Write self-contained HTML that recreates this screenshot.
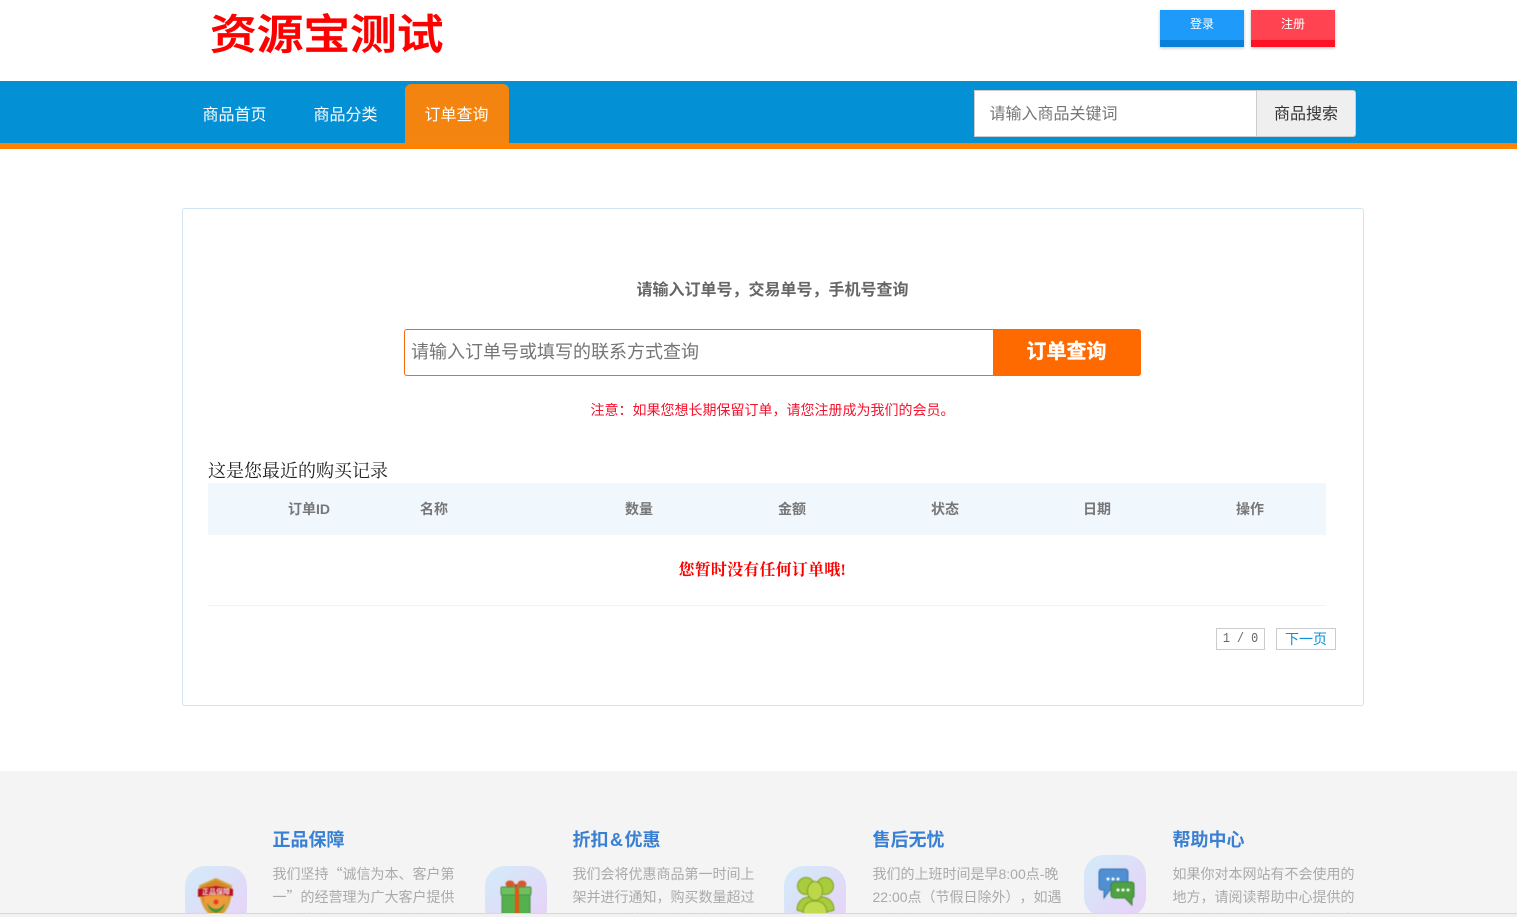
<!DOCTYPE html>
<html lang="zh"><head><meta charset="utf-8"><title>订单查询</title>
<style>
*{box-sizing:border-box}
html,body{margin:0;padding:0;width:1517px;height:917px;overflow:hidden;background:#fff}
body{position:relative;font-family:"Liberation Sans","Noto Sans CJK SC",sans-serif;color:#666;text-spacing-trim:space-all}
.a{position:absolute;white-space:nowrap}
.th{position:absolute;top:500px;font-size:14px;font-weight:700;line-height:18px;color:#777;transform:translateX(-50%)}
.h{position:absolute;top:828px;font-size:18px;font-weight:700;line-height:24px;color:#3a80d2}
.p{position:absolute;top:863px;width:186px;font-size:14px;line-height:23px;color:#aaa;height:50px;overflow:hidden}
.c{font-family:"Noto Sans CJK SC",sans-serif}
.ic{position:absolute;width:62px;height:62px;border-radius:20px;background:linear-gradient(135deg,#d2ecf9,#e9d0f7)}
.ic svg{position:absolute;left:0;top:0;filter:blur(.4px)}
</style></head><body>

<div class="a" style="left:210px;top:1px;font-size:41.500px;line-height:60px;color:#f00;font-family:'Noto Sans CJK SC',sans-serif;font-weight:500;-webkit-text-stroke:.7px #f00;transform:scaleX(1.125);transform-origin:left center;filter:blur(.3px)">资源宝测试</div>

<div class="a" style="left:1160px;top:10px;width:84px;height:37px;background:#1e9afa;border-bottom:7px solid #0a80d8;box-shadow:0 1px 3px rgba(0,0,0,.25);color:#fff;font-size:12px;line-height:29px;text-align:center">登录</div>
<div class="a" style="left:1251px;top:10px;width:84px;height:37px;background:#ff4350;border-bottom:7px solid #ff1125;box-shadow:0 1px 3px rgba(0,0,0,.25);color:#fff;font-size:12px;line-height:29px;text-align:center">注册</div>

<div class="a" style="left:0;top:81px;width:1517px;height:68px;background:#0390d4;border-bottom:6px solid #ff8200"></div>
<div class="a" style="left:405px;top:84px;width:104px;height:59px;background:#f2840f;border-radius:6px 6px 0 0"></div>
<div class="a" style="left:202.500px;top:105px;font-size:16px;line-height:22px;color:#fff">商品首页</div>
<div class="a" style="left:313.500px;top:105px;font-size:16px;line-height:22px;color:#fff">商品分类</div>
<div class="a" style="left:424.500px;top:105px;font-size:16px;line-height:22px;color:#fff">订单查询</div>
<div class="a" style="left:974px;top:90px;width:283px;height:47px;background:#fff;border:1px solid #ccc;font-size:16px;line-height:47px;padding-left:14.500px;color:#757575">请输入商品关键词</div>
<div class="a" style="left:1256px;top:90px;width:100px;height:47px;background:#efefef;border:1px solid #ccc;border-radius:0 3px 3px 0;font-size:16px;line-height:47px;text-align:center;color:#333">商品搜索</div>

<div class="a" style="left:182px;top:208px;width:1182px;height:498px;border:1px solid #cfe5f5;border-radius:3px"></div>
<div class="a" style="left:0;width:1545px;top:280px;text-align:center;font-size:16px;font-weight:700;line-height:22px;color:#666">请输入订单号，交易单号，手机号查询</div>

<div class="a" style="left:404px;top:329px;width:737px;height:47px;border:1px solid #f66b0e;border-radius:3px;background:#fff;font-size:18px;line-height:45px;padding-left:6px;color:#757575">请输入订单号或填写的联系方式查询</div>
<div class="a" style="left:993px;top:329px;width:148px;height:47px;background:#ff6a00;border-radius:0 3px 3px 0;font-size:20px;font-weight:700;line-height:47px;text-align:center;color:#fff;-webkit-text-stroke:.3px #fff;padding-right:1px">订单查询</div>
<div class="a" style="left:590.500px;top:400px;font-size:14px;line-height:20px;color:#f5122c">注意：如果您想长期保留订单，请您注册成为我们的会员。</div>

<div class="a" style="left:208px;top:460px;font-family:'Liberation Serif','Noto Serif CJK SC',serif;font-size:18px;line-height:23px;color:#222">这是您最近的购买记录</div>
<div class="a" style="left:208px;top:483px;width:1118px;height:52px;background:#f0f7fd"></div>
<div class="th" style="left:309px">订单ID</div>
<div class="th" style="left:434px">名称</div>
<div class="th" style="left:639px">数量</div>
<div class="th" style="left:792px">金额</div>
<div class="th" style="left:945px">状态</div>
<div class="th" style="left:1097px">日期</div>
<div class="th" style="left:1250px">操作</div>
<div class="a" style="left:678.500px;top:559px;font-family:'Liberation Serif','Noto Serif CJK SC',serif;font-size:16px;letter-spacing:.2px;font-weight:700;line-height:24px;color:#f00">您暂时没有任何订单哦!</div>
<div class="a" style="left:208px;top:605px;width:1118px;height:1px;background:#f3f3f3"></div>

<div class="a" style="left:1216px;top:628px;width:49px;height:22px;border:1px solid #ccc"></div>
<div class="a" style="left:1216px;top:628px;width:49px;height:22px;font-family:'Liberation Mono',monospace;font-size:14px;line-height:22px;text-align:center;color:#666;transform:scaleX(.84)">1 / 0</div>
<div class="a" style="left:1276px;top:628px;width:60px;height:22px;border:1px solid #ccc;font-size:14px;line-height:21px;text-align:center;color:#0891d6">下一页</div>

<div class="a" style="left:0;top:771px;width:1517px;height:146px;background:#f4f4f4"></div>

<div class="ic" style="left:185px;top:866px">
<svg width="62" height="62" viewBox="0 0 62 62"><path d="M15 20L31 13L46 20C46 36 42 46 31 52C20 46 15 36 15 20Z" fill="#d9842a" stroke="#d0a838" stroke-width="2"/><path d="M19 30H43V36C41 42 37 46 31 49C25 46 21 42 19 36Z" fill="#ef9a3c"/><path d="M13 23L31 20L48 23V30L31 28L13 31Z" fill="#b80f1c"/><text x="31" y="28" font-size="7" font-weight="700" fill="#f5dcdc" text-anchor="middle" font-family="'Noto Sans CJK SC',sans-serif">正品保障</text><path d="M22 37C23 43 27 46 31 47C35 46 39 43 40 37C37 41 34 43 31 43C28 43 25 41 22 37Z" fill="#3d9a35"/><circle cx="31" cy="36" r="2.500" fill="#e0401e"/></svg></div>
<div class="h" style="left:272.500px">正品保障</div>
<div class="p" style="left:272.500px"><span class="c">我们坚持“诚信为本、客户第一”的经营理为广大客户提供优质的产品及服务，赢得了信赖</span></div>

<div class="ic" style="left:485px;top:866px">
<svg width="62" height="62" viewBox="0 0 62 62"><ellipse cx="25" cy="18" rx="4.500" ry="3.500" fill="#d9582a"/><ellipse cx="37" cy="18" rx="4.500" ry="3.500" fill="#d9582a"/><circle cx="31" cy="20" r="2" fill="#c94a1e"/><rect x="17" y="29" width="28" height="20" fill="#55b04e" stroke="#4b8f48"/><rect x="16" y="21" width="30" height="8" rx="1" fill="#6cc05e" stroke="#4b8f48"/><rect x="30" y="21" width="4" height="30" fill="#e2560f"/></svg></div>
<div class="h" style="left:572.500px">折扣<span style="margin:0 1.500px">&amp;</span>优惠</div>
<div class="p" style="left:572.500px">我们会将优惠商品第一时间上架并进行通知，购买数量超过人民币上的的，优惠力度更大</div>

<div class="ic" style="left:784px;top:866px">
<svg width="62" height="62" viewBox="0 0 62 62"><g stroke="#7f9f28" stroke-width="1"><circle cx="22" cy="20" r="8.500" fill="#a9cc3c"/><circle cx="41" cy="20" r="8.500" fill="#a9cc3c"/><path d="M13 44C13 36 18 32 24 31L39 31C45 32 50 36 50 44C44 47 19 47 13 44Z" fill="#a9cc3c"/><path d="M19 48C19 39 24 35 31 35C38 35 43 39 43 48C38 52 24 52 19 48Z" fill="#c2dc50"/><ellipse cx="31" cy="25" rx="7.500" ry="9.500" fill="#bcd84a"/></g></svg></div>
<div class="h" style="left:872.500px">售后无忧</div>
<div class="p" style="left:872.500px;width:195px">我们的上班时间是早8:00点-晚22:00点（节假日除外），如遇到任何问题可以随时联系我们</div>

<div class="ic" style="left:1084px;top:855px">
<svg width="62" height="62" viewBox="0 0 62 62"><path d="M18 14H41C43 14 44 15 44 18V32C44 34 43 35 41 35H26L20 43V35H18C16 35 15 34 15 32V18C15 15 16 14 18 14Z" fill="#4f8fd2" stroke="#3f72ad"/><circle cx="24" cy="24" r="1.500" fill="#fff"/><circle cx="29" cy="24" r="1.500" fill="#fff"/><circle cx="34" cy="24" r="1.500" fill="#fff"/><path d="M31 27H47C49 27 50 28 50 30V40C50 42 49 43 48 43V50L41 43H31C29 43 27 42 27 40V30C27 28 29 27 31 27Z" fill="#4fa243" stroke="#3f8436"/><circle cx="34" cy="35" r="1.500" fill="#fff"/><circle cx="39" cy="35" r="1.500" fill="#fff"/><circle cx="44" cy="35" r="1.500" fill="#fff"/></svg></div>
<div class="h" style="left:1172.500px">帮助中心</div>
<div class="p" style="left:1172.500px">如果你对本网站有不会使用的地方，请阅读帮助中心提供的相关内容，或者联系我们的客服</div>

<div class="a" style="left:0;top:913px;width:1517px;height:4px;background:#f1f1f1;border-top:1px solid #d8d8d8"></div>
</body></html>
